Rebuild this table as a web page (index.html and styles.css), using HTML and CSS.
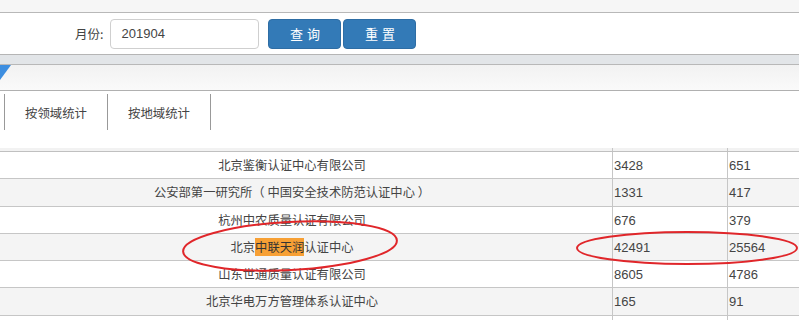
FILE: index.html
```html
<!DOCTYPE html>
<html lang="zh">
<head>
<meta charset="utf-8">
<link rel="stylesheet" href="styles.css">
</head>
<body>
<div class="topband"></div>
<div class="form">
  <label class="label">月份:</label>
  <input class="input" type="text" value="201904">
  <button class="btn">查询</button>
  <button class="btn">重置</button>
</div>
<div class="band"></div>
<div class="titlebar"><span class="tri"></span></div>
<div class="tabs">
  <div class="tab">按领域统计</div>
  <div class="tab last">按地域统计</div>
</div>
<div class="table">
  <div class="row head"><div class="c1"></div><div class="c2"></div><div class="c3"></div></div>
  <div class="row"><div class="c1">北京鉴衡认证中心有限公司</div><div class="c2">3428</div><div class="c3">651</div></div>
  <div class="row alt"><div class="c1">公安部第一研究所（ 中国安全技术防范认证中心 ）</div><div class="c2">1331</div><div class="c3">417</div></div>
  <div class="row"><div class="c1">杭州中农质量认证有限公司</div><div class="c2">676</div><div class="c3">379</div></div>
  <div class="row alt"><div class="c1">北京<mark class="hl">中联天润</mark>认证中心</div><div class="c2">42491</div><div class="c3">25564</div></div>
  <div class="row"><div class="c1">山东世通质量认证有限公司</div><div class="c2">8605</div><div class="c3">4786</div></div>
  <div class="row alt"><div class="c1">北京华电万方管理体系认证中心</div><div class="c2">165</div><div class="c3">91</div></div>
  <div class="row tail"><div class="c1"></div><div class="c2"></div><div class="c3"></div></div>
  <svg class="marks" width="799" height="322" viewBox="0 0 799 322">
    <ellipse cx="290" cy="246" rx="107" ry="24" transform="rotate(-3 290 246)" fill="none" stroke="#e0262a" stroke-width="2"/>
    <ellipse cx="687" cy="248" rx="110" ry="16" fill="none" stroke="#e0262a" stroke-width="2"/>
  </svg>
</div>
</body>
</html>
```
FILE: styles.css
```css
html, body {
  margin: 0;
  padding: 0;
  background: #fff;
  overflow: hidden;
}
body {
  width: 799px;
  height: 322px;
  position: relative;
  font-family: "Liberation Sans", "Noto Sans CJK SC", sans-serif;
  color: #333;
}
.topband {
  height: 12px;
  background: #f6f6f6;
  border-bottom: 1px solid #b8b8b8;
}
.form {
  height: 41px;
  border-bottom: 1px solid #b5b5b5;
  display: flex;
  align-items: center;
  padding-left: 75px;
}
.label {
  font-family: "Noto Sans CJK SC", sans-serif;
  font-size: 12.5px;
  color: #444;
  margin-right: 7px;
}
.input {
  box-sizing: border-box;
  width: 149px;
  height: 30px;
  border: 1px solid #cfcfcf;
  border-radius: 4px;
  padding: 0 10px;
  font-family: "Liberation Sans", sans-serif;
  font-size: 13px;
  color: #444;
  margin: 0 9px 0 0;
}
.btn {
  box-sizing: border-box;
  width: 73px;
  height: 30px;
  background: #337ab7;
  border: 1px solid #2e6da4;
  border-radius: 4px;
  color: #fff;
  font-family: "Noto Sans CJK SC", sans-serif;
  font-size: 13px;
  letter-spacing: 4px;
  padding: 0 0 0 4px;
  margin-right: 2px;
}
.band {
  height: 9px;
  background: #e2e5e8;
  border-bottom: 1px solid #b8b8b8;
}
.titlebar {
  height: 25px;
  background: linear-gradient(#f2f2f2, #fafafa);
  border-bottom: 1px solid #b0b0b0;
  display: flex;
}
.tri {
  width: 11px;
  height: 15px;
  background: #3d8ee0;
  clip-path: polygon(0 0, 100% 0, 0 100%);
}
.tabs {
  display: flex;
  margin-top: 3px;
  padding-left: 4px;
  height: 36px;
}
.tab {
  width: 102px;
  border-left: 1px solid #999;
  display: flex;
  align-items: center;
  justify-content: center;
  font-family: "Noto Sans CJK SC", sans-serif;
  font-size: 12.4px;
  color: #444;
  padding-top: 2px;
}
.tab.last {
  border-right: 1px solid #999;
}
.table {
  margin-top: 18px;
}
.row {
  display: grid;
  grid-template-columns: 613px 115px 1fr;
  height: 26.3px;
  border-bottom: 1px solid #c6c6c6;
  font-size: 13px;
}
.row.head {
  height: 3px;
  background: #f2f2f2;
  border-bottom: 1px solid #c0c0c0;
}
.row.tail {
  height: 4px;
  border-bottom: none;
}
.row.alt {
  background: #f4f4f4;
}
.c1 {
  border-right: 1px solid #c6c6c6;
  text-align: center;
  padding-right: 28px;
  font-family: "Noto Sans CJK SC", sans-serif;
  font-size: 12.3px;
  line-height: 27px;
  color: #444;
  white-space: nowrap;
}
.c2 {
  border-right: 1px solid #c6c6c6;
  padding-left: 1px;
  line-height: 27px;
  color: #444;
}
.c3 {
  padding-left: 1px;
  line-height: 27px;
  color: #444;
}
.hl {
  background: #f7a035;
  color: #333;
  padding: 0;
}
.marks {
  position: absolute;
  left: 0;
  top: 0;
  pointer-events: none;
}
```
